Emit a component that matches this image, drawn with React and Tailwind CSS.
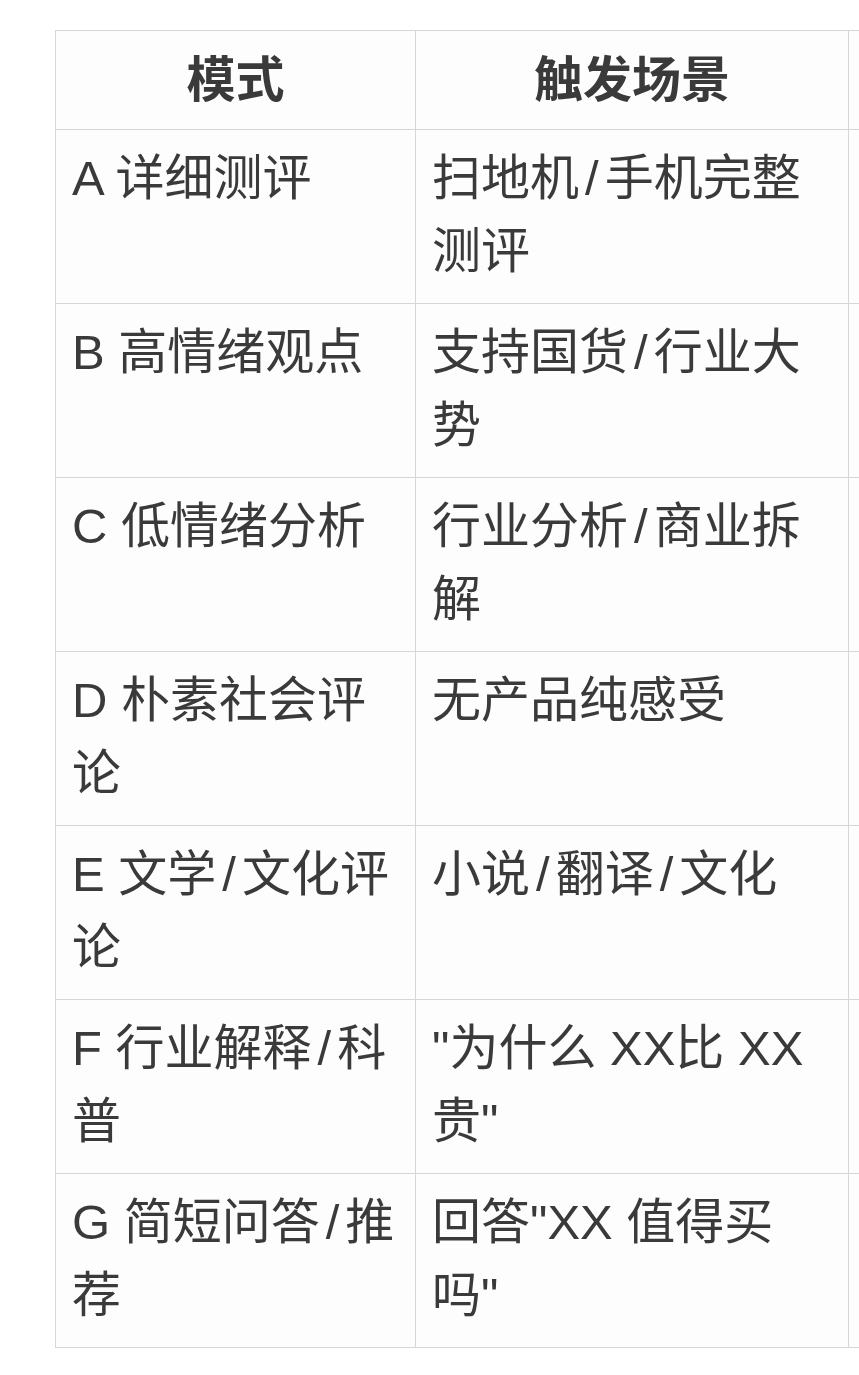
import React from 'react';

const rows = [
  { mode: 'A 详细测评', scene: '扫地机/手机完整测评' },
  { mode: 'B 高情绪观点', scene: '支持国货/行业大势' },
  { mode: 'C 低情绪分析', scene: '行业分析/商业拆解' },
  { mode: 'D 朴素社会评论', scene: '无产品纯感受' },
  { mode: 'E 文学/文化评论', scene: '小说/翻译/文化' },
  { mode: 'F 行业解释/科普', scene: '"为什么 XX比 XX 贵"' },
  { mode: 'G 简短问答/推荐', scene: '回答"XX 值得买吗"' },
];

// slashes in the reference have extra room on both sides
function Text({ value }) {
  const parts = value.split('/');
  return (
    <>
      {parts.map((p, i) => (
        <React.Fragment key={i}>
          {i > 0 && <span className="mx-[6px]">/</span>}
          {p}
        </React.Fragment>
      ))}
    </>
  );
}

export default function App() {
  return (
    <div
      className="w-[859px] min-h-[1375px] overflow-hidden bg-white pt-[30px] pl-[55px] text-[#3a3a3a]"
      style={{ fontFamily: '"Liberation Sans", "Noto Sans CJK SC", sans-serif' }}
    >
      <table className="w-[1093px] max-w-none table-fixed border-collapse bg-[#fdfdfd] text-[49px] leading-[73px]">
        <colgroup>
          <col className="w-[360px]" />
          <col className="w-[433px]" />
          <col className="w-[300px]" />
        </colgroup>
        <thead>
          <tr>
            <th className="border border-[#d6d6d6] pt-[13px] pb-[12px] text-center font-bold">模式</th>
            <th className="border border-[#d6d6d6] pt-[13px] pb-[12px] text-center font-bold">触发场景</th>
            <th className="border border-[#d6d6d6]"></th>
          </tr>
        </thead>
        <tbody>
          {rows.map((r) => (
            <tr key={r.mode}>
              <td className="h-[174px] border border-[#d6d6d6] px-4 pt-[12px] pb-[15px] align-top">
                <Text value={r.mode} />
              </td>
              <td className="border border-[#d6d6d6] px-4 pt-[12px] pb-[15px] align-top">
                <Text value={r.scene} />
              </td>
              <td className="border border-[#d6d6d6]"></td>
            </tr>
          ))}
        </tbody>
      </table>
    </div>
  );
}
